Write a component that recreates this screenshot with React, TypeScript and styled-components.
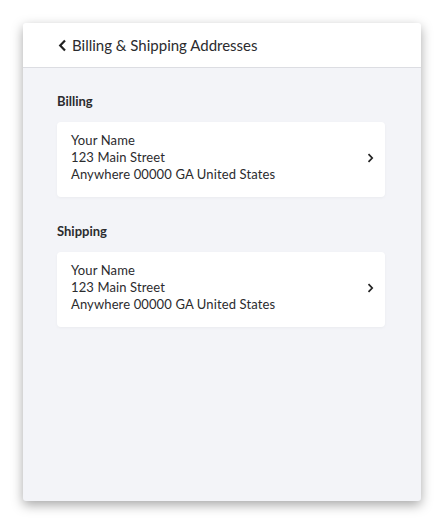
import styled, { createGlobalStyle } from "styled-components"

const GlobalStyle = createGlobalStyle`
  body {
    margin: 0;
    background: #ffffff;
    font-family: "Lato", "Liberation Sans", sans-serif;
    color: #2b2b2e;
  }
`

type Address = {
  name: string
  street: string
  city: string
}

const sections: { title: string; address: Address }[] = [
  {
    title: "Billing",
    address: { name: "Your Name", street: "123 Main Street", city: "Anywhere 00000 GA United States" },
  },
  {
    title: "Shipping",
    address: { name: "Your Name", street: "123 Main Street", city: "Anywhere 00000 GA United States" },
  },
]

const App = () => {
  return (
    <>
      <GlobalStyle />
      <Page>
        <Frame>
          <Header>
            <BackButton>
              <svg width="9" height="13" viewBox="0 0 9 13">
                <path d="M7 1.5 L2.2 6.5 L7 11.5" fill="none" stroke="#222" strokeWidth="2.2" />
              </svg>
              Billing &amp; Shipping Addresses
            </BackButton>
          </Header>

          <Content>
            {sections.map((s) => (
              <Section key={s.title}>
                <SectionTitle>{s.title}</SectionTitle>
                <Card>
                  <Lines>
                    <li>{s.address.name}</li>
                    <li>{s.address.street}</li>
                    <li>{s.address.city}</li>
                  </Lines>
                  <svg width="7" height="10" viewBox="0 0 7 10">
                    <path d="M1.5 1.2 L5.2 5 L1.5 8.8" fill="none" stroke="#222" strokeWidth="1.7" />
                  </svg>
                </Card>
              </Section>
            ))}
          </Content>
        </Frame>
      </Page>
    </>
  )
}

export default App

const Page = styled.div`
  padding: 23px;
  width: 444px;
  height: 524px;
  box-sizing: border-box;
`

const Frame = styled.div`
  width: 398px;
  height: 478px;
  border-radius: 3px;
  background: #f3f4f8;
  box-shadow: 0 4px 12px rgba(0, 0, 0, 0.35);
  overflow: hidden;
  display: flex;
  flex-direction: column;
`

const Header = styled.header`
  height: 44px;
  flex: none;
  background: #ffffff;
  border-bottom: 1px solid #dcdde2;
  display: flex;
  align-items: center;
  padding-left: 35px;
`

const BackButton = styled.div`
  display: flex;
  align-items: center;
  gap: 5px;
  font-size: 15px;
  color: #2b2b2e;
`

const Content = styled.main`
  padding: 25px 36px 0 34px;
  display: flex;
  flex-direction: column;
  gap: 26px;
`

const Section = styled.section`
  display: flex;
  flex-direction: column;
  gap: 13px;
`

const SectionTitle = styled.h2`
  margin: 0;
  font-size: 13px;
  font-weight: 700;
  line-height: 16px;
  color: #2b2b2e;
`

const Card = styled.div`
  background: #ffffff;
  border-radius: 4px;
  box-shadow: 0 1px 3px rgba(0, 0, 0, 0.04);
  padding: 10px 11px 14px 14px;
  display: flex;
  align-items: center;
  justify-content: space-between;
`

const Lines = styled.ul`
  list-style: none;
  margin: 0;
  padding: 0;
  font-size: 13px;
  line-height: 17px;
  letter-spacing: 0.12px;
  color: #2b2b2e;
`
